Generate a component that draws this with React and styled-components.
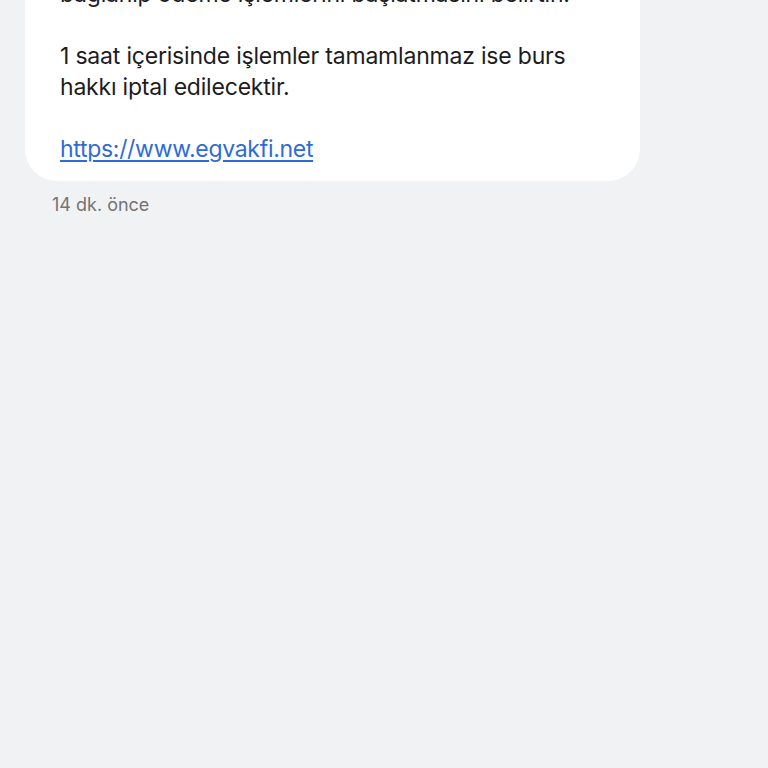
import styled, { createGlobalStyle } from "styled-components";

const GlobalStyle = createGlobalStyle`
  html, body {
    margin: 0;
    padding: 0;
    background: #f1f2f4;
    font-family: Inter, "Noto Sans", "DejaVu Sans", sans-serif;
    overflow: hidden;
  }
`;

const Page = styled.div`
  width: 768px;
  height: 768px;
  overflow: hidden;
  background: #f1f2f4;
`;

const Thread = styled.div`
  display: flex;
  flex-direction: column;
  align-items: flex-start;
  padding-left: 25px;
  margin-top: -21px;
`;

const Bubble = styled.div`
  width: 615px;
  box-sizing: border-box;
  background: #ffffff;
  border-radius: 0 0 32px 32px;
  padding: 0 30px 16px 35px;
`;

const Paragraph = styled.p`
  margin: 0 0 31px;
  font-size: 23px;
  line-height: 31px;
  color: #1c1c1e;
  letter-spacing: -0.2px;
`;

const Link = styled.a`
  font-size: 23px;
  line-height: 31px;
  color: #2f6bd6;
  letter-spacing: -0.3px;
  text-decoration: underline;
  text-underline-offset: 3px;
  text-decoration-thickness: 1.5px;
`;

const Time = styled.div`
  margin: 12px 0 0 27px;
  font-size: 18px;
  line-height: 24px;
  color: #737373;
`;

export default function App() {
  return (
    <Page>
      <GlobalStyle />
      <Thread>
        <Bubble>
          <Paragraph>bağlanıp ödeme işlemlerini başlatmasını belirtin.</Paragraph>
          <Paragraph>
            1 saat içerisinde işlemler tamamlanmaz ise burs
            <br />
            hakkı iptal edilecektir.
          </Paragraph>
          <Link href="#">https://www.egvakfi.net</Link>
        </Bubble>
        <Time>14 dk. önce</Time>
      </Thread>
    </Page>
  );
}
